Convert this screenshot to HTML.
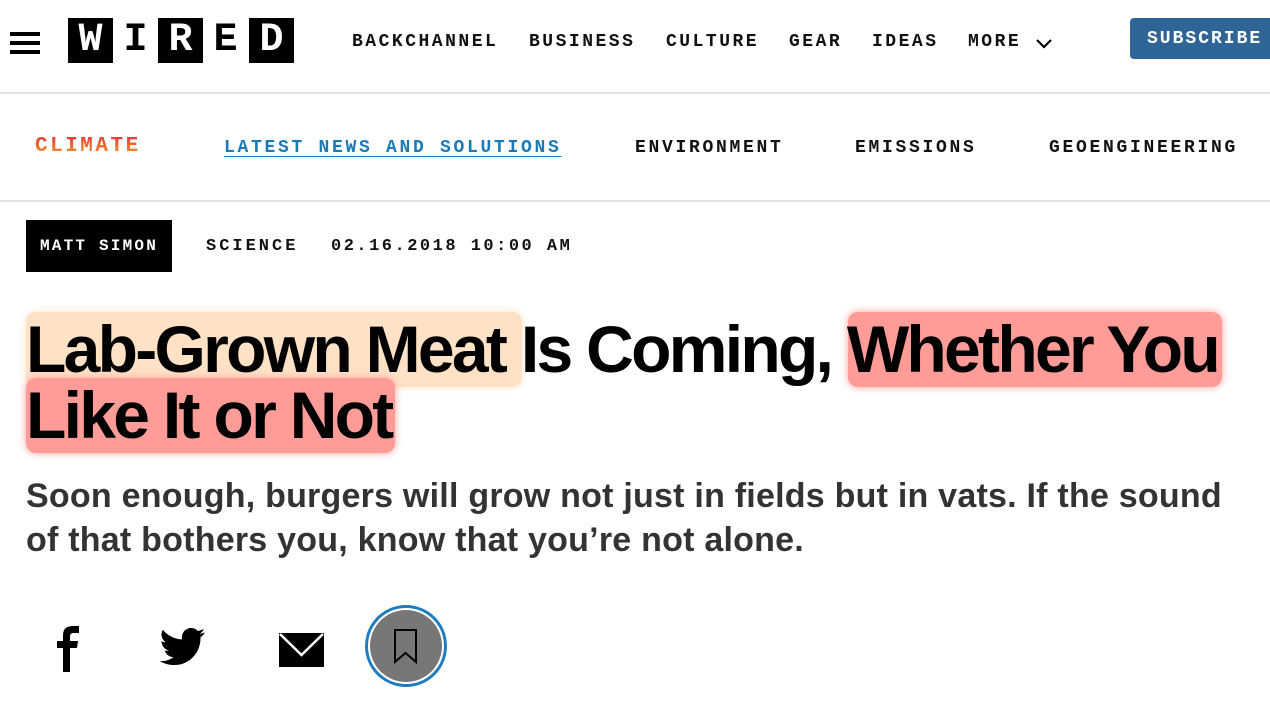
<!DOCTYPE html>
<html><head><meta charset="utf-8"><style>
*{margin:0;padding:0;box-sizing:border-box}
body{width:1270px;height:722px;overflow:hidden;background:#fff;font-family:"Liberation Sans",sans-serif;position:relative}
.mono{font-family:"Liberation Mono",monospace;position:absolute;white-space:nowrap}
.nav{top:32px;font-size:18px;letter-spacing:2.5px;color:#111;font-weight:bold}
.sub{top:138px;font-size:18px;letter-spacing:2.7px;color:#111;font-weight:bold}
.hr{position:absolute;left:0;width:1270px;height:2px;background:#e2e2e2}
.logo{position:absolute;top:18px;height:45px;display:flex;align-items:center;justify-content:center;font-family:"Liberation Mono",monospace;font-weight:bold;font-size:40px}
.blk{background:#000;color:#fff}
.wht{background:#fff;color:#000}
.hl{position:absolute;border-radius:10px}
h1{position:absolute;left:26px;top:316px;font-size:66px;line-height:66px;letter-spacing:-2.7px;font-weight:bold;color:#000;white-space:nowrap}
.dek{position:absolute;left:26px;top:474px;font-size:34px;line-height:44px;font-weight:bold;color:#333;white-space:nowrap;letter-spacing:0.23px}
</style></head><body>
<div style="position:absolute;left:10px;top:32px;width:30px;height:4px;background:#000"></div>
<div style="position:absolute;left:10px;top:41px;width:30px;height:4px;background:#000"></div>
<div style="position:absolute;left:10px;top:50px;width:30px;height:4px;background:#000"></div>
<div class="logo blk" style="left:68px;width:45px">W</div>
<div class="logo wht" style="left:113px;width:45px">I</div>
<div class="logo blk" style="left:158px;width:45px">R</div>
<div class="logo wht" style="left:203px;width:45px">E</div>
<div class="logo blk" style="left:249px;width:45px">D</div>
<div class="mono nav" style="left:352px">BACKCHANNEL</div>
<div class="mono nav" style="left:529px">BUSINESS</div>
<div class="mono nav" style="left:666px">CULTURE</div>
<div class="mono nav" style="left:789px">GEAR</div>
<div class="mono nav" style="left:872px">IDEAS</div>
<div class="mono nav" style="left:968px">MORE</div>
<svg style="position:absolute;left:1035px;top:37px" width="18" height="12" viewBox="0 0 18 12"><path d="M2 3 L9 10 L16 3" fill="none" stroke="#000" stroke-width="2.2"/></svg>
<div style="position:absolute;left:1130px;top:18px;width:145px;height:41px;background:#2f6497;border-radius:4px;color:#fff;font-family:'Liberation Mono',monospace;font-weight:bold;font-size:18px;letter-spacing:2px;line-height:43px;padding-left:17px">SUBSCRIBE</div>
<div class="hr" style="top:92px"></div>
<div class="mono sub" style="left:35px;font-size:21px;letter-spacing:2.5px;top:135px;background:linear-gradient(#e8303a,#f5a623);-webkit-background-clip:text;background-clip:text;color:transparent">CLIMATE</div>
<div class="mono sub" style="left:224px;color:#1a7ab8;text-decoration:underline;text-underline-offset:4px">LATEST NEWS AND SOLUTIONS</div>
<div class="mono sub" style="left:635px">ENVIRONMENT</div>
<div class="mono sub" style="left:855px">EMISSIONS</div>
<div class="mono sub" style="left:1049px">GEOENGINEERING</div>
<div class="hr" style="top:200px"></div>
<div style="position:absolute;left:26px;top:220px;width:146px;height:52px;background:#000"></div>
<div class="mono" style="left:40px;top:237px;font-size:16px;letter-spacing:2.2px;color:#fff;font-weight:bold">MATT SIMON</div>
<div class="mono" style="left:206px;top:237px;font-size:17px;letter-spacing:3px;color:#111;font-weight:bold">SCIENCE</div>
<div class="mono" style="left:331px;top:237px;font-size:17px;letter-spacing:2.5px;color:#111;font-weight:bold">02.16.2018 10:00 AM</div>
<div class="hl" style="left:26px;top:312px;width:496px;height:75px;background:#ffe2c6;box-shadow:0 0 8px #ffe2c6"></div>
<div class="hl" style="left:848px;top:312px;width:374px;height:75px;background:#ff9c98;box-shadow:0 0 8px #ff9c98"></div>
<div class="hl" style="left:26px;top:378px;width:369px;height:75px;background:#ff9c98;box-shadow:0 0 8px #ff9c98"></div>
<h1>Lab-Grown Meat Is Coming, Whether You<br>Like It or Not</h1>
<div class="dek">Soon enough, burgers will grow not just in fields but in vats. If the sound<br>of that bothers you, know that you’re not alone.</div>
<svg style="position:absolute;left:56px;top:626px" width="24" height="46" viewBox="0 0 24 46"><path d="M7 46 V22 H1 V15 H7 V10 C7 3 10 0 17 0 H23 V7 H18 C15 7 14 8 14 11 V15 H22 L21 22 H14 V46 Z" fill="#000"/></svg>
<svg style="position:absolute;left:160px;top:628px" width="46" height="38" viewBox="0 0 24 20"><path d="M23.6 2.3c-.9.4-1.8.6-2.8.8 1-.6 1.8-1.6 2.1-2.7-.9.6-2 1-3.1 1.2C19 .6 17.7 0 16.3 0c-2.7 0-4.9 2.2-4.9 4.9 0 .4 0 .8.1 1.1C7.4 5.8 3.8 3.900 1.4.9 1 1.6.7 2.5.7 3.4c0 1.7.9 3.2 2.2 4.1-.8 0-1.6-.2-2.2-.6v.1c0 2.4 1.7 4.4 3.9 4.8-.4.1-.8.2-1.3.2-.3 0-.6 0-.9-.1.6 2 2.4 3.4 4.6 3.4-1.7 1.3-3.8 2.1-6.1 2.1-.4 0-.8 0-1.200-.1 2.2 1.4 4.8 2.2 7.5 2.2 9.1 0 14-7.5 14-14v-.6c1-.7 1.800-1.6 2.4-2.6z" fill="#000"/></svg>
<svg style="position:absolute;left:279px;top:633px" width="45" height="34" viewBox="0 0 45 34"><path d="M0 0 H45 V34 H0 Z" fill="#000"/><path d="M1 1 L22.5 22 L44 1" fill="none" stroke="#fff" stroke-width="2.5"/></svg>
<div style="position:absolute;left:365px;top:605px;width:82px;height:82px;border-radius:50%;border:3px solid #1f7dbf;background:#fff"></div>
<div style="position:absolute;left:370px;top:610px;width:72px;height:72px;border-radius:50%;background:#777"></div>
<svg style="position:absolute;left:393px;top:629px" width="26" height="36" viewBox="0 0 26 36"><path d="M2 1 H23 V33 L12.5 24 L2 33 Z" fill="none" stroke="#000" stroke-width="2"/></svg>
</body></html>
